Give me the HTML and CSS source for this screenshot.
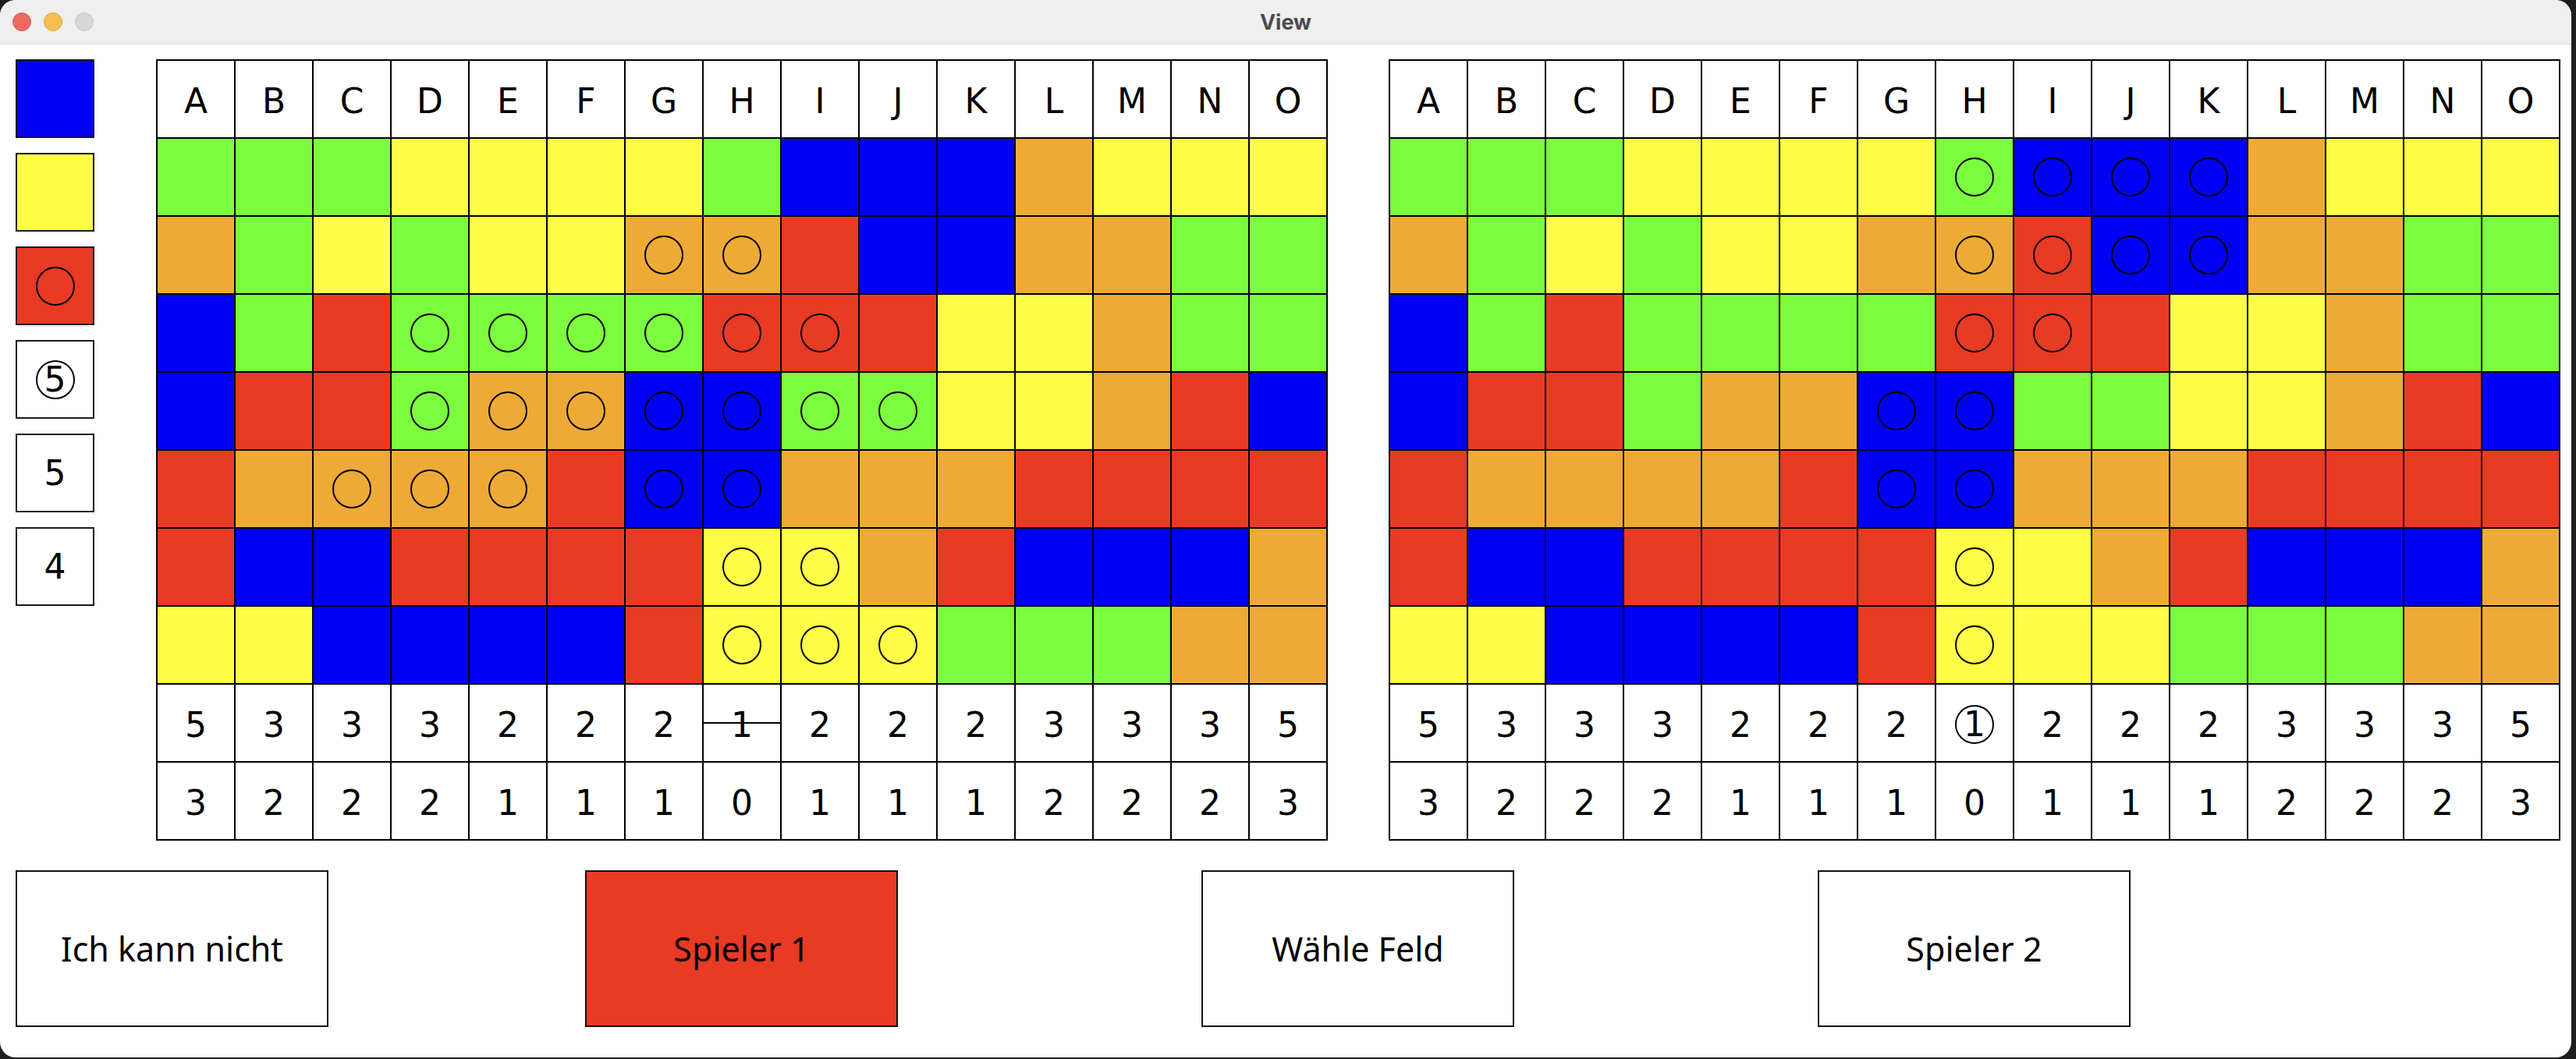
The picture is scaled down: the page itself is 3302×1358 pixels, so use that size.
FILE: index.html
```html
<!DOCTYPE html>
<html lang="de">

<head>
  <meta charset="UTF-8">
  <meta name="viewport" content="width=device-width, initial-scale=1.0">
  <title>View</title>
  <link rel="stylesheet" href="styles.css">
</head>

<body>
  <div class="window">
    <div class="titlebar">
      <div class="lights">
        <span class="light close"></span>
        <span class="light min"></span>
        <span class="light max"></span>
      </div>
      <div class="title">View</div>
      <div></div>
    </div>

    <div class="content">
      <div class="top">
        <div class="legend">
          <div class="swatch b"></div>
          <div class="swatch y"></div>
          <div class="swatch r"><span class="dot"></span></div>
          <div class="swatch"><span class="ring">5</span></div>
          <div class="swatch">5</div>
          <div class="swatch">4</div>
        </div>
        <div class="board" id="board1"></div>
        <div class="board" id="board2"></div>
      </div>

      <div class="actions">
        <button class="btn">Ich kann nicht</button>
        <button class="btn active">Spieler 1</button>
        <button class="btn">Wähle Feld</button>
        <button class="btn">Spieler 2</button>
      </div>
    </div>
  </div>

  <script>
    const HEAD = 'ABCDEFGHIJKLMNO';
    const FIELD = [
      'gggyyyygbbboyyy',
      'ogygyyoorbboogg',
      'bgrggggrrryyogg',
      'brrgoobbggyyorb',
      'roooorbbooorrrr',
      'rbbrrrryyorbbbo',
      'yybbbbryyygggoo'
    ];
    const STEPS = [5, 3, 3, 3, 2, 2, 2, 1, 2, 2, 2, 3, 3, 3, 5];
    const DIST = [3, 2, 2, 2, 1, 1, 1, 0, 1, 1, 1, 2, 2, 2, 3];

    const marks1 = [
      '...............',
      '......oo.......',
      '...oooooo......',
      '...ooooooo.....',
      '..ooo.oo.......',
      '.......oo......',
      '.......ooo.....'
    ];
    const marks2 = [
      '.......oooo....',
      '.......oooo....',
      '.......oo......',
      '......oo.......',
      '......oo.......',
      '.......o.......',
      '.......o.......'
    ];

    function cell(board, cls, html) {
      const div = document.createElement('div');
      div.className = 'cell ' + cls;
      div.innerHTML = html;
      board.appendChild(div);
    }

    function buildBoard(id, marks, mode) {
      const board = document.getElementById(id);
      for (let i = 0; i < 15; i++) cell(board, 'head', HEAD[i]);
      FIELD.forEach((row, r) => {
        for (let i = 0; i < 15; i++) {
          const dot = marks[r][i] === 'o' ? '<span class="dot"></span>' : '';
          cell(board, row[i], dot);
        }
      });
      STEPS.forEach((n, i) => {
        if (i === 7 && mode === 'struck') cell(board, 'num struck', n);
        else if (i === 7 && mode === 'ring') cell(board, 'num', '<span class="ring">' + n + '</span>');
        else cell(board, 'num', n);
      });
      DIST.forEach(n => cell(board, 'num', n));
    }

    buildBoard('board1', marks1, 'struck');
    buildBoard('board2', marks2, 'ring');
  </script>
</body>

</html>
```

FILE: styles.css
```css
body {
  margin: 0;
  background-color: #1e1e1e;
  font-family: "DejaVu Sans", sans-serif;
}

.window {
  width: 3296px;
  height: 1356px;
  background: white;
  border-radius: 20px;
  overflow: hidden;
}

.titlebar {
  height: 56px;
  display: grid;
  grid-template-columns: 1fr auto 1fr;
  align-items: center;
  background-color: #efefef;
  border-bottom: 1px solid #d9d9d9;
}

.lights {
  display: flex;
  gap: 16px;
  padding-left: 16px;
}

.light {
  width: 24px;
  height: 24px;
  border-radius: 50%;
  box-sizing: border-box;
}

.close {
  background-color: #ee6a5f;
  border: 1px solid #d85a50;
}

.min {
  background-color: #f5bf4f;
  border: 1px solid #d9a640;
}

.max {
  background-color: #d7d7d7;
  border: 1px solid #c2c2c2;
}

.title {
  font-family: Inter, "Open Sans", sans-serif;
  font-weight: 700;
  font-size: 27px;
  color: #4b4b4b;
}

.content {
  padding: 19px 20px 0;
}

.top {
  display: flex;
  align-items: flex-start;
}

.legend {
  display: flex;
  flex-direction: column;
  gap: 19px;
  margin-right: 79px;
}

.swatch {
  width: 101px;
  height: 101px;
  box-sizing: border-box;
  border: 2px solid #1a1a1a;
  display: flex;
  justify-content: center;
  align-items: center;
  font-size: 44px;
  background-color: white;
}

.board {
  display: grid;
  grid-template-columns: repeat(15, 100px);
  grid-auto-rows: 100px;
  border: 1px solid #000;
  margin-right: 78px;
}

.cell {
  box-sizing: border-box;
  border: 1px solid #000;
  display: flex;
  justify-content: center;
  align-items: center;
  font-size: 44px;
  background-color: white;
  padding-top: 4px;
}

.cell.g, .cell.y, .cell.o, .cell.r, .cell.b {
  padding-top: 0;
}

.g { background-color: #7cfc3e; }
.y { background-color: #fffd48; }
.o { background-color: #efaa35; }
.r { background-color: #e93a24; }
.b { background-color: #0000f5; }

.swatch.b { background-color: #0000f5; }
.swatch.y { background-color: #fffd48; }
.swatch.r { background-color: #e93a24; }

.dot {
  width: 50px;
  height: 50px;
  box-sizing: border-box;
  border: 2px solid #000;
  border-radius: 50%;
}

.ring {
  width: 50px;
  height: 50px;
  box-sizing: border-box;
  border: 2px solid #000;
  border-radius: 50%;
  display: flex;
  justify-content: center;
  align-items: center;
  font-size: 44px;
  line-height: 1;
}

.struck {
  position: relative;
}

.struck::after {
  content: "";
  position: absolute;
  left: 0;
  right: 0;
  top: 48px;
  height: 2px;
  background-color: #000;
}

.actions {
  display: grid;
  grid-template-columns: 730px 790px 790px 401px;
  margin-top: 38px;
}

.btn {
  width: 401px;
  height: 201px;
  border: 2px solid #111;
  background-color: white;
  font-family: "Noto Sans", sans-serif;
  font-size: 43px;
  color: #000;
  padding: 0;
  cursor: pointer;
}

.btn.active {
  background-color: #e93a24;
}
```
